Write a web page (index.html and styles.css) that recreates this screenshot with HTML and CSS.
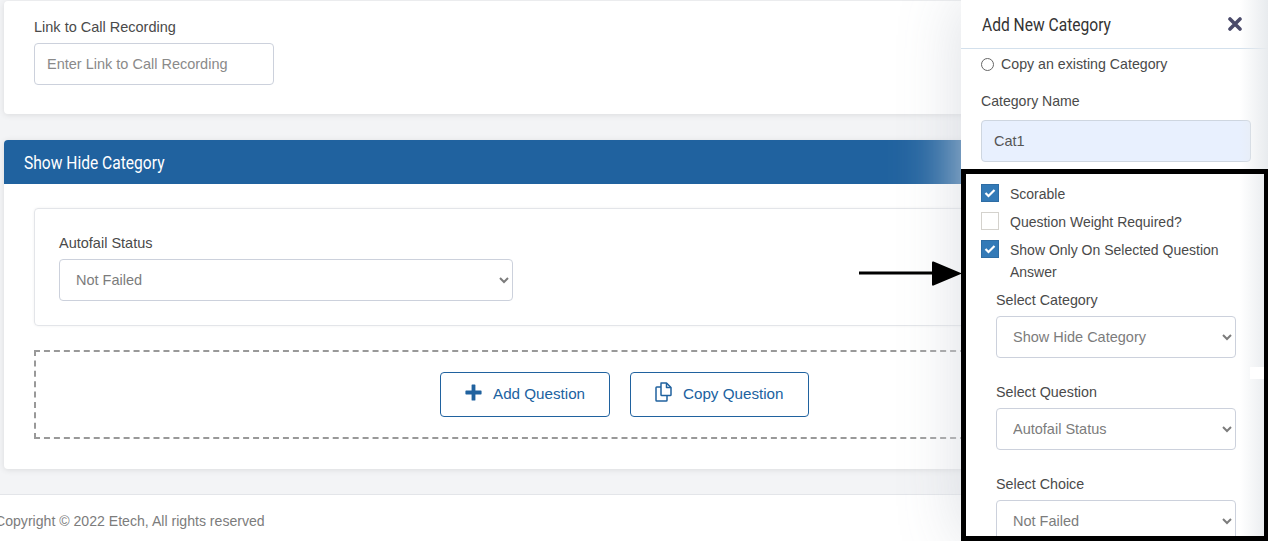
FILE: index.html
```html
<!DOCTYPE html>
<html lang="en">
<head>
    <meta charset="UTF-8">
    <meta name="viewport" content="width=device-width, initial-scale=1.0">
    <title>Add New Category</title>
    <link rel="stylesheet" href="styles.css">
</head>
<body>
    <div class="page">
        <div class="card link-card">
            <label class="field-label">Link to Call Recording</label>
            <input class="text-input link-input" type="text" placeholder="Enter Link to Call Recording">
        </div>

        <div class="card category-card">
            <div class="category-head"><span class="narrow-title">Show Hide Category</span></div>
            <div class="category-body">
                <div class="question-box">
                    <label class="field-label">Autofail Status</label>
                    <select class="select-input">
                        <option>Not Failed</option>
                    </select>
                </div>
                <div class="dashed-box">
                    <button class="outline-btn add-btn">
                        <svg class="btn-icon" width="17" height="17" viewBox="0 0 16 16"><path d="M6.200 1a.6.6 0 0 1 .6-.6h2.400a.6.6 0 0 1 .6.6v5.200H15a.6.6 0 0 1 .6.6v2.400a.6.6 0 0 1-.6.6H9.800V15a.6.6 0 0 1-.6.6H6.800a.6.6 0 0 1-.6-.6V9.800H1a.6.6 0 0 1-.6-.6V6.800a.6.6 0 0 1 .6-.6h5.200z" fill="#20629f"/></svg>
                        <span>Add Question</span>
                    </button>
                    <button class="outline-btn copy-btn">
                        <svg class="btn-icon" width="17" height="20" viewBox="0 0 17 20" fill="none" stroke="#20629f" stroke-width="1.500" stroke-linejoin="round"><path d="M6 1h5.500L16 5.500v7.200a.8.8 0 0 1-.8.8H6.800a.8.8 0 0 1-.8-.8V1.800A.8.8 0 0 1 6.800 1z"/><path d="M11.500 1v4.500H16"/><path d="M6 5H1.800a.8.8 0 0 0-.8.8v12.400a.8.8 0 0 0 .8.8h9.400a.8.8 0 0 0 .8-.8v-4.700"/></svg>
                        <span>Copy Question</span>
                    </button>
                </div>
            </div>
        </div>

        <div class="footer"><span class="copyright">Copyright © 2022 Etech, All rights reserved</span></div>
    </div>

    <div class="panel">
        <div class="panel-head">
            <span class="narrow-title panel-title">Add New Category</span>
            <svg class="close-icon" width="14" height="14" viewBox="0 0 14 14"><path d="M2 2l10 10M12 2L2 12" stroke="#4a4a6a" stroke-width="3.600" stroke-linecap="round"/></svg>
        </div>
        <div class="panel-body">
            <label class="radio-row"><span class="radio"></span>Copy an existing Category</label>
            <label class="field-label name-label">Category Name</label>
            <input class="text-input name-input" type="text" value="Cat1">

            <div class="check-list">
                <div class="check-row">
                    <span class="check on"><svg width="12" height="10" viewBox="0 0 12 10"><path d="M1.500 5l3 3 6-6" fill="none" stroke="#fff" stroke-width="2.200"/></svg></span>
                    <span>Scorable</span>
                </div>
                <div class="check-row">
                    <span class="check"></span>
                    <span>Question Weight Required?</span>
                </div>
                <div class="check-row wrap-row">
                    <span class="check on"><svg width="12" height="10" viewBox="0 0 12 10"><path d="M1.500 5l3 3 6-6" fill="none" stroke="#fff" stroke-width="2.200"/></svg></span>
                    <span class="wrap-text">Show Only On Selected Question Answer</span>
                </div>
            </div>

            <div class="sub-fields">
                <label class="field-label">Select Category</label>
                <select class="select-input"><option>Show Hide Category</option></select>
                <label class="field-label">Select Question</label>
                <select class="select-input"><option>Autofail Status</option></select>
                <label class="field-label">Select Choice</label>
                <select class="select-input"><option>Not Failed</option></select>
            </div>
        </div>
        <div class="panel-edge"></div>
        <div class="edge-gap"></div>
    </div>

    <!-- annotation drawn over the screenshot -->
    <div class="note-box"></div>
    <svg class="note-arrow" width="104" height="26" viewBox="0 0 104 26"><path d="M0 10.500h74v3H0z" fill="#000"/><path d="M73 1.500q0-1.500 1.500-1l28.500 12-28.500 12q-1.500.5-1.500-1z" fill="#000"/></svg>
</body>
</html>
```
FILE: styles.css
```css
* {
    box-sizing: border-box;
}

html, body {
    height: 100%;
}

body {
    margin: 0;
    overflow: hidden;
    font-family: "Liberation Sans", Arial, sans-serif;
    font-size: 14px;
    color: #4a4a4a;
    background-color: #f3f4f6;
}

.page {
    padding: 1px 23px 0 4px;
}

.card {
    background: white;
    border-radius: 4px;
    box-shadow: 0 1px 6px rgba(0, 0, 0, 0.1);
}

.link-card {
    height: 113px;
    padding: 18px 30px 0;
}

.link-card .field-label,
.question-box .field-label {
    font-size: 14.5px;
}

.field-label {
    display: block;
    height: 24px;
    line-height: 16px;
    color: #4a4a4a;
}

.text-input {
    display: block;
    height: 42px;
    padding: 0 12px;
    font-family: inherit;
    font-size: 14.5px;
    color: #555;
    border: 1px solid #ccd1dc;
    border-radius: 4px;
    outline: none;
}

.link-input {
    width: 240px;
}

.link-input::placeholder {
    color: #8a8a8a;
    opacity: 1;
}

.category-card {
    height: 329px;
    margin-top: 26px;
}

.category-head {
    height: 44px;
    padding-left: 20px;
    background-color: #20629f;
    border-radius: 4px 4px 0 0;
}

/* no condensed family installed, so squeeze Roboto to the title width */
.narrow-title {
    display: inline-block;
    font-family: Roboto, "Liberation Sans", sans-serif;
    font-size: 19px;
    line-height: 46px;
    color: white;
    transform: scaleX(0.82);
    transform-origin: left center;
}

.category-body {
    padding: 24px 30px 0;
}

.question-box {
    height: 118px;
    padding: 26px 24px 0;
    border: 1px solid #e3e5e9;
    border-radius: 4px;
    box-shadow: 0 0 3px rgba(0, 0, 0, 0.06);
}

.question-box .select-input {
    width: 454px;
}

.select-input {
    display: block;
    width: 240px;
    height: 42px;
    padding: 0 12px;
    font-family: inherit;
    font-size: 14.5px;
    color: #7c7c7c;
    background-color: white;
    border: 1px solid #ccd1dc;
    border-radius: 4px;
}

.dashed-box {
    display: flex;
    justify-content: center;
    align-items: center;
    gap: 20px;
    height: 89px;
    margin-top: 24px;
    border: 2px dashed #999;
}

.outline-btn {
    display: flex;
    align-items: center;
    height: 45px;
    padding: 0;
    font-family: inherit;
    font-size: 15.2px;
    color: #20629f;
    background: white;
    border: 1px solid #20629f;
    border-radius: 4px;
}

.outline-btn span {
    margin-bottom: 3px;
}

.add-btn {
    width: 170px;
    padding-left: 24px;
}

.copy-btn {
    width: 179px;
    padding-left: 24px;
}

.btn-icon {
    flex: none;
    margin: 0 11px 5px 0;
}

.footer {
    height: 47px;
    margin: 25px -23px 0 -4px;
    line-height: 53px;
    color: #7c7c7c;
    background: white;
    border-top: 1px solid #e3e5e9;
}

.copyright {
    margin-left: -5px;
    font-size: 14.1px;
}

.panel {
    position: absolute;
    top: 0;
    right: 0;
    bottom: 0;
    width: 307px;
    overflow: hidden;
    background: white;
    box-shadow: 0 0 60px rgba(215, 218, 224, 0.9);
}

.panel-head {
    display: flex;
    justify-content: space-between;
    align-items: center;
    height: 49px;
    padding: 0 26px 0 21px;
    border-bottom: 1px solid #d3e0ec;
}

.panel-title {
    margin-top: 2px;
    color: #333;
}

.panel-body {
    padding: 5px 17px 0 20px;
}

.radio-row {
    display: flex;
    align-items: center;
    height: 20px;
    font-size: 14.2px;
}

.radio {
    width: 13px;
    height: 13px;
    margin-right: 7px;
    border: 1px solid #666;
    border-radius: 50%;
}

.name-label {
    margin-top: 19px;
    height: 27px;
    font-size: 14.1px;
}

.name-input {
    width: 270px;
    background-color: #e8f0fe;
    border-color: #ced6e0;
}

.check-list {
    margin-top: 22px;
}

.check-row {
    display: flex;
    gap: 11px;
    min-height: 28px;
    line-height: 20px;
}

.wrap-row {
    line-height: 22px;
}

.wrap-text {
    margin-top: -1px;
}

.check {
    display: flex;
    justify-content: center;
    align-items: center;
    flex: none;
    width: 18px;
    height: 18px;
    border: 1px solid #d4d2cd;
}

.check.on {
    background-color: #337ab7;
    border-color: #2e6da4;
}

.sub-fields {
    padding-left: 15px;
    margin-top: 9px;
}

.sub-fields .field-label {
    margin-top: 26px;
    height: 24px;
    font-size: 14.3px;
}

.sub-fields .field-label:first-child {
    margin-top: 0;
}

.panel-edge {
    position: absolute;
    top: 0;
    right: 0;
    bottom: 0;
    width: 28px;
    background: linear-gradient(to right, rgba(232, 235, 238, 0), #e8ebee);
}

.edge-gap {
    position: absolute;
    top: 367px;
    right: 0;
    width: 18px;
    height: 12px;
    background: white;
}

.note-box {
    position: absolute;
    top: 169px;
    left: 961px;
    width: 308px;
    height: 372px;
    border: 5px solid black;
}

.note-arrow {
    position: absolute;
    top: 261px;
    left: 859px;
}
```
